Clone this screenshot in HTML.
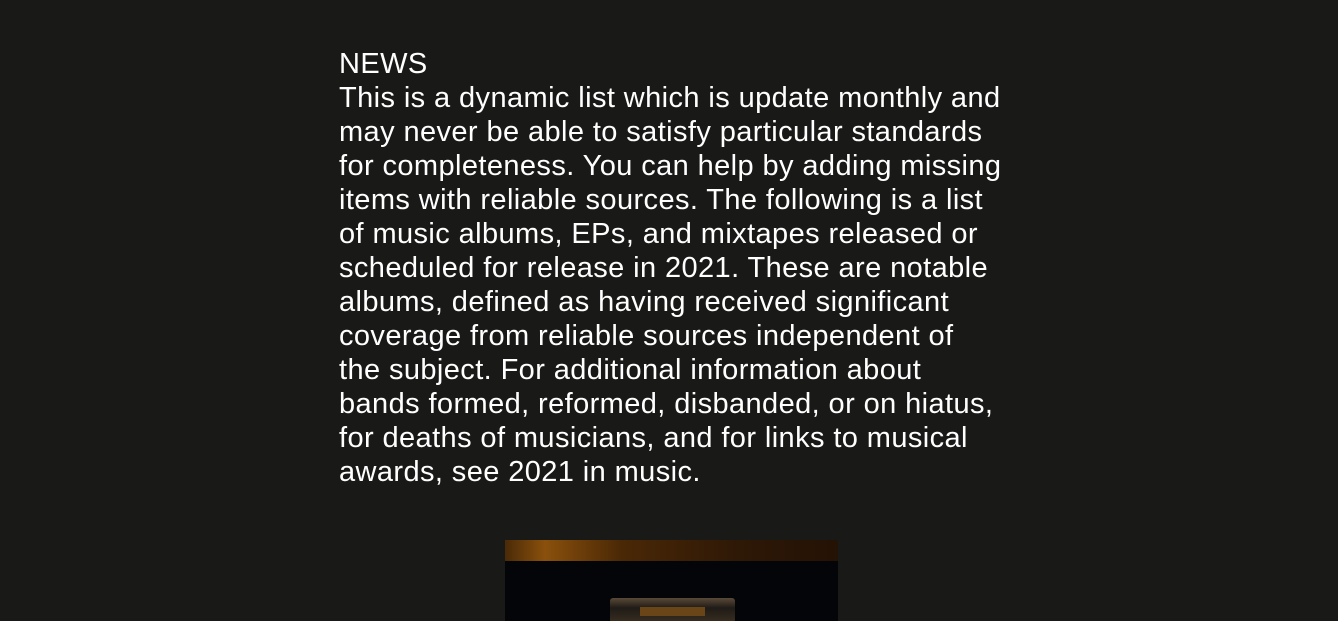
<!DOCTYPE html>
<html><head><meta charset="utf-8"><style>
html,body{margin:0;padding:0;background:#191a18;width:1338px;height:621px;overflow:hidden}
.t{position:absolute;left:339px;top:47px;color:#fff;font-family:"Liberation Sans",Arial,sans-serif;font-size:29px;letter-spacing:0.4px;line-height:34px;white-space:nowrap}
.img{position:absolute;left:505px;top:540px;width:333px;height:81px;background:#040508;overflow:hidden}
.band{position:absolute;left:0;top:0;width:100%;height:21px;background:linear-gradient(90deg,#4a2a08 0%,#8a500c 12%,#4a2806 35%,#2e1806 70%,#241205 100%)}
.dev{position:absolute;left:105px;top:58px;width:125px;height:25px;background:linear-gradient(180deg,#5a4a38,#1f1b17 40%,#3a2e20);border-radius:3px}
.dev2{position:absolute;left:135px;top:67px;width:65px;height:9px;background:#6a4518}
</style></head><body>
<div class="t">NEWS<br>This is a dynamic list which is update monthly and<br>may never be able to satisfy particular standards<br>for completeness. You can help by adding missing<br>items with reliable sources. The following is a list<br>of music albums, EPs, and mixtapes released or<br>scheduled for release in 2021. These are notable<br>albums, defined as having received significant<br>coverage from reliable sources independent of<br>the subject. For additional information about<br>bands formed, reformed, disbanded, or on hiatus,<br>for deaths of musicians, and for links to musical<br>awards, see 2021 in music.</div>
<div class="img"><div class="band"></div><div class="dev"></div><div class="dev2"></div></div>
</body></html>
